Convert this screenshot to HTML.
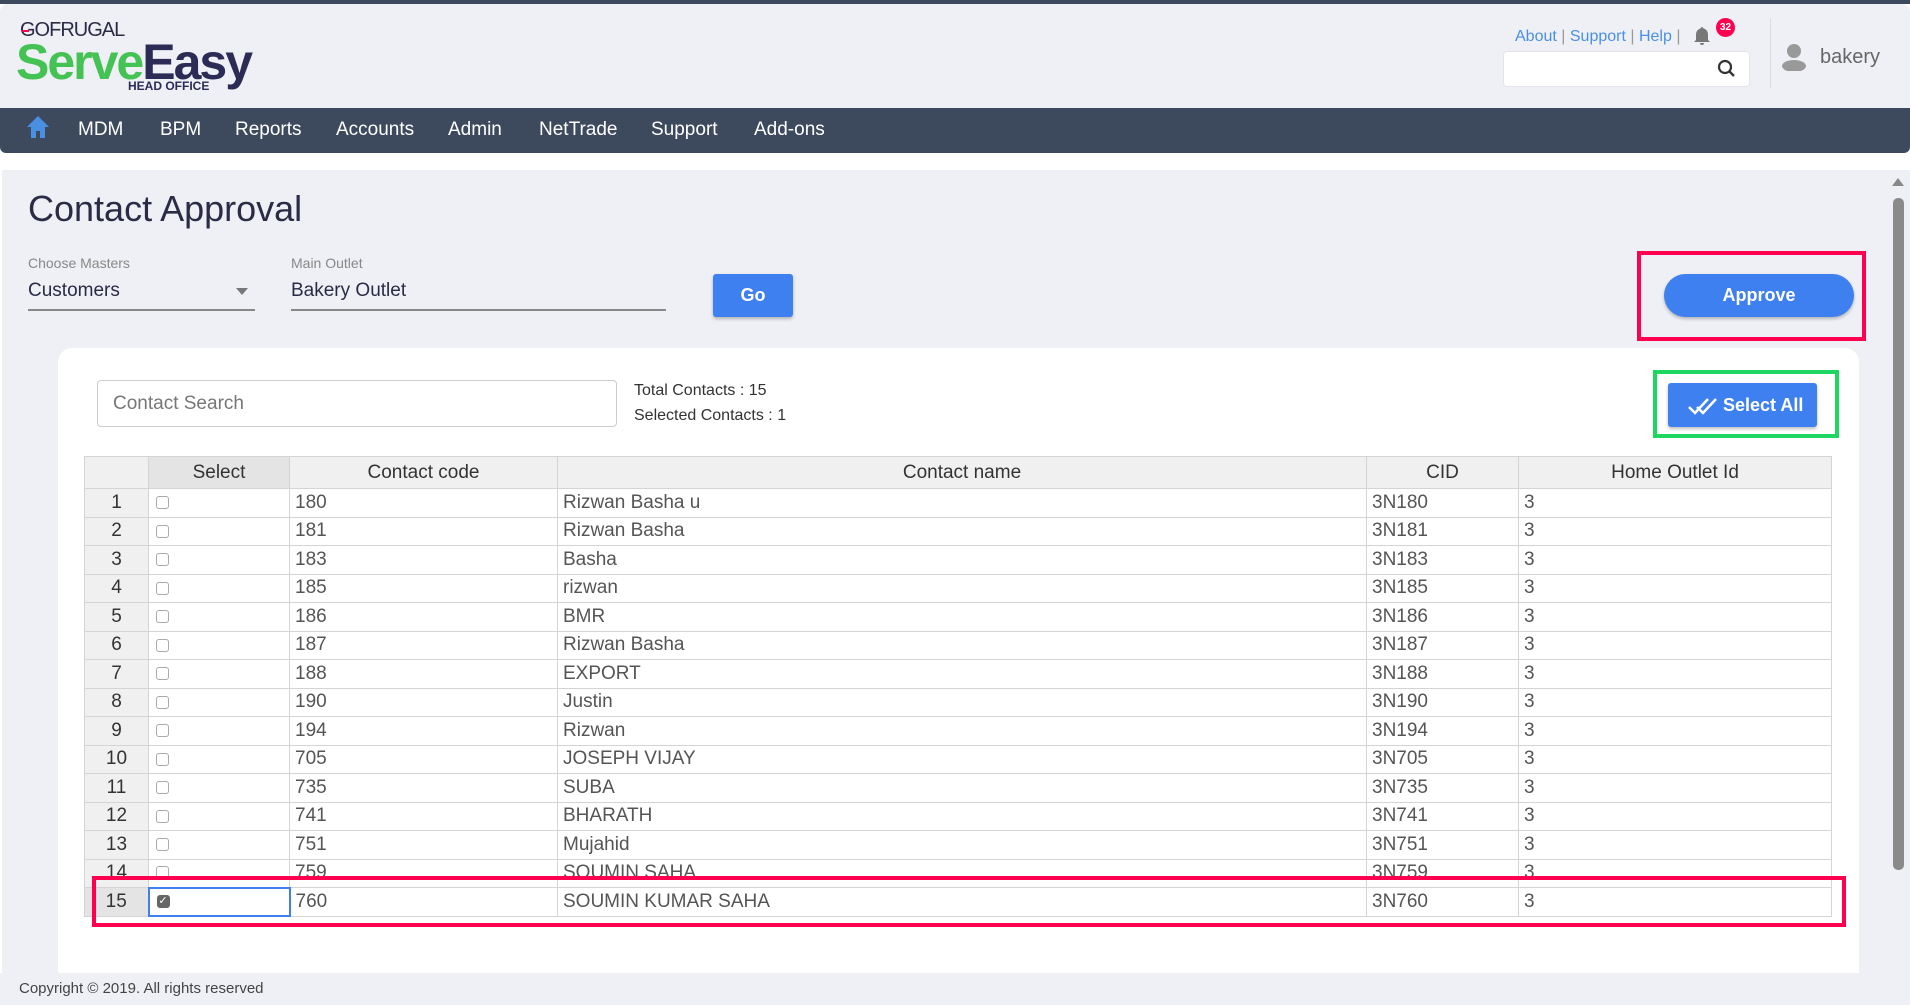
<!DOCTYPE html>
<html><head><meta charset="utf-8"><style>
*{box-sizing:border-box;margin:0;padding:0}
html{width:1910px;height:1005px;overflow:hidden}
body{width:1910px;height:1005px;overflow:hidden;background:#fff;font-family:"Liberation Sans Narrow","Liberation Sans",sans-serif;position:relative}
.a{position:absolute;white-space:nowrap}
.nav span{position:absolute;top:119px;color:#fff;font-size:19px}
table{border-collapse:collapse;position:absolute;left:84px;top:456px;width:1748px;table-layout:fixed}
td,th{border:1px solid #d4d4d4;height:28.5px;font-size:19px;color:#555;font-weight:normal;padding:0 5px;text-align:left;overflow:hidden;white-space:nowrap}
th{background:#f0f0f0;color:#333;text-align:center;height:32px}
td.i{background:#f0f0f0;color:#333;text-align:center}
.cb{display:inline-block;width:13px;height:13px;border:1px solid #aaa;border-radius:3px;vertical-align:middle;margin-left:2px}
</style></head><body>
<div class="a" style="left:0;top:0;width:1910px;height:4px;background:#3d4a5e"></div>
<div class="a" style="left:0;top:4px;width:1910px;height:104px;background:#eff0f5;border-radius:8px 8px 0 0"></div>
<div class="a" style="left:20px;top:19px;font-size:20px;color:#2b2b45;font-family:'Liberation Sans',sans-serif;letter-spacing:-1px">GOFRUGAL</div>
<div class="a" style="left:22px;top:30px;width:7px;height:2px;background:#ff0050"></div>
<div class="a" style="left:16px;top:33px;font-size:50px;font-weight:bold;font-family:'Liberation Sans',sans-serif;letter-spacing:-2px"><span style="color:#44c254">Serve</span><span style="color:#2b2b55">Easy</span></div>
<div class="a" style="left:128px;top:79px;font-size:12px;font-weight:bold;color:#2b2b55;font-family:'Liberation Sans',sans-serif">HEAD OFFICE</div>

<div class="a" style="left:1515px;top:28px;font-size:16px;color:#4a90e2">About <span style="color:#999">|</span> Support <span style="color:#999">|</span> Help <span style="color:#999">|</span></div>
<svg class="a" style="left:1692px;top:26px" width="20" height="20" viewBox="0 0 20 20"><path d="M10 1a2 2 0 0 1 1.5 1.5C14.5 3.3 16 5.5 16 9v5l2 2H2l2-2V9c0-3.5 1.5-5.7 4.5-6.5A2 2 0 0 1 10 1z M8 17h4a2 2 0 0 1-4 0z" fill="#777"/></svg>
<div class="a" style="left:1716px;top:18px;width:19px;height:19px;border-radius:50%;background:#ff0050;color:#fff;font-size:10px;font-weight:bold;text-align:center;line-height:19px;font-family:'Liberation Sans',sans-serif">32</div>
<div class="a" style="left:1503px;top:51px;width:247px;height:36px;background:#fff;border-radius:4px;border:1px solid #e4e4ea"></div>
<svg class="a" style="left:1717px;top:59px" width="20" height="20" viewBox="0 0 20 20"><circle cx="8" cy="8" r="6" fill="none" stroke="#333" stroke-width="2.2"/><path d="M12.5 12.5L17 17" stroke="#333" stroke-width="2.4"/></svg>
<div class="a" style="left:1770px;top:18px;width:1px;height:70px;background:#dcdde3"></div>
<svg class="a" style="left:1782px;top:43px" width="24" height="28" viewBox="0 0 24 28"><circle cx="12" cy="8" r="7" fill="#999"/><ellipse cx="12" cy="23" rx="12" ry="6" fill="#999"/></svg>
<div class="a" style="left:1820px;top:46px;font-size:20px;color:#666;font-family:'Liberation Sans',sans-serif">bakery</div>

<div class="a nav" style="left:0;top:108px;width:1910px;height:45px;background:#3d4a5e;border-radius:0 0 6px 6px"></div>
<svg class="a" style="left:26px;top:115px" width="24" height="24" viewBox="0 0 24 24"><path d="M12 1L1 12h4v11h5v-7h4v7h5V12h4z" fill="#4a90e2"/></svg>
<div class="nav"><span style="left:78px">MDM</span><span style="left:160px">BPM</span><span style="left:235px">Reports</span><span style="left:336px">Accounts</span><span style="left:448px">Admin</span><span style="left:539px">NetTrade</span><span style="left:651px">Support</span><span style="left:754px">Add-ons</span></div>

<div class="a" style="left:2px;top:170px;width:1908px;height:835px;background:#eef0f5"></div>
<div class="a" style="left:1892px;top:178px;width:0;height:0;border-left:6px solid transparent;border-right:6px solid transparent;border-bottom:8px solid #888"></div>
<div class="a" style="left:1893px;top:198px;width:11px;height:672px;background:#8a8a8a;border-radius:5px"></div>

<div class="a" style="left:28px;top:188px;font-size:36px;color:#2b2b45;font-family:'Liberation Sans',sans-serif;font-weight:300">Contact Approval</div>
<div class="a" style="left:28px;top:255px;font-size:14px;color:#888">Choose Masters</div>
<div class="a" style="left:291px;top:255px;font-size:14px;color:#888">Main Outlet</div>
<div class="a" style="left:28px;top:280px;font-size:19px;color:#2b2b45">Customers</div>
<div class="a" style="left:291px;top:280px;font-size:19px;color:#2b2b45">Bakery Outlet</div>
<div class="a" style="left:236px;top:288px;border-left:6px solid transparent;border-right:6px solid transparent;border-top:7px solid #777"></div>
<div class="a" style="left:28px;top:309px;width:227px;height:2px;background:#888"></div>
<div class="a" style="left:291px;top:309px;width:375px;height:2px;background:#888"></div>
<div class="a" style="left:713px;top:274px;width:80px;height:43px;background:#3f80f0;border-radius:3px;color:#fff;font-size:18px;font-weight:bold;text-align:center;line-height:43px;box-shadow:0 2px 3px rgba(0,0,0,.25)">Go</div>

<div class="a" style="left:1637px;top:251px;width:229px;height:90px;border:4px solid #ff0050"></div>
<div class="a" style="left:1664px;top:274px;width:190px;height:43px;background:#3f80f0;border-radius:22px;color:#fff;font-size:18px;font-weight:bold;text-align:center;line-height:43px;box-shadow:0 2px 3px rgba(0,0,0,.25)">Approve</div>

<div class="a" style="left:58px;top:348px;width:1801px;height:625px;background:#fff;border-radius:14px 14px 0 0"></div>
<div class="a" style="left:97px;top:380px;width:520px;height:47px;border:1px solid #ccc;border-radius:4px;font-size:19px;color:#777;padding:12px 15px">Contact Search</div>
<div class="a" style="left:634px;top:382px;font-size:16px;color:#333">Total Contacts : 15</div>
<div class="a" style="left:634px;top:407px;font-size:16px;color:#333">Selected Contacts : 1</div>
<div class="a" style="left:1653px;top:370px;width:186px;height:68px;border:4px solid #1ed760"></div>
<div class="a" style="left:1668px;top:383px;width:149px;height:44px;background:#3f80f0;border-radius:3px;color:#fff;font-size:18px;font-weight:bold;line-height:44px;padding-left:55px;box-shadow:0 2px 3px rgba(0,0,0,.25)">Select All</div>
<svg class="a" style="left:1688px;top:396px" width="30" height="20" viewBox="0 0 30 20"><path d="M1 11l6 6L20 3M9 11l6 6L28 3" fill="none" stroke="#fff" stroke-width="2.5"/></svg>

<table>
<colgroup><col style="width:64px"><col style="width:141px"><col style="width:268px"><col style="width:809px"><col style="width:152px"><col></colgroup>
<tr><th></th><th style="background:#e4e4e4">Select</th><th>Contact code</th><th>Contact name</th><th>CID</th><th>Home Outlet Id</th></tr>
<tr><td class="i">1</td><td><span class="cb"></span></td><td>180</td><td>Rizwan Basha u</td><td>3N180</td><td>3</td></tr>
<tr><td class="i">2</td><td><span class="cb"></span></td><td>181</td><td>Rizwan Basha</td><td>3N181</td><td>3</td></tr>
<tr><td class="i">3</td><td><span class="cb"></span></td><td>183</td><td>Basha</td><td>3N183</td><td>3</td></tr>
<tr><td class="i">4</td><td><span class="cb"></span></td><td>185</td><td>rizwan</td><td>3N185</td><td>3</td></tr>
<tr><td class="i">5</td><td><span class="cb"></span></td><td>186</td><td>BMR</td><td>3N186</td><td>3</td></tr>
<tr><td class="i">6</td><td><span class="cb"></span></td><td>187</td><td>Rizwan Basha</td><td>3N187</td><td>3</td></tr>
<tr><td class="i">7</td><td><span class="cb"></span></td><td>188</td><td>EXPORT</td><td>3N188</td><td>3</td></tr>
<tr><td class="i">8</td><td><span class="cb"></span></td><td>190</td><td>Justin</td><td>3N190</td><td>3</td></tr>
<tr><td class="i">9</td><td><span class="cb"></span></td><td>194</td><td>Rizwan</td><td>3N194</td><td>3</td></tr>
<tr><td class="i">10</td><td><span class="cb"></span></td><td>705</td><td>JOSEPH VIJAY</td><td>3N705</td><td>3</td></tr>
<tr><td class="i">11</td><td><span class="cb"></span></td><td>735</td><td>SUBA</td><td>3N735</td><td>3</td></tr>
<tr><td class="i">12</td><td><span class="cb"></span></td><td>741</td><td>BHARATH</td><td>3N741</td><td>3</td></tr>
<tr><td class="i">13</td><td><span class="cb"></span></td><td>751</td><td>Mujahid</td><td>3N751</td><td>3</td></tr>
<tr><td class="i">14</td><td><span class="cb"></span></td><td>759</td><td>SOUMIN SAHA</td><td>3N759</td><td>3</td></tr>
<tr><td class="i" style="background:#e4e4e4">15</td><td style="border:2px solid #3f80f0"><span class="cb" style="background:#666;border-color:#666;color:#fff;font-size:11px;line-height:11px;text-align:center">✓</span></td><td>760</td><td>SOUMIN KUMAR SAHA</td><td>3N760</td><td>3</td></tr>
</table>
<div class="a" style="left:92px;top:876px;width:1754px;height:51px;border:4px solid #ff0050"></div>

<div class="a" style="left:0;top:973px;width:1910px;height:32px;background:#eef0f5"></div>
<div class="a" style="left:19px;top:980px;font-size:15px;color:#444">Copyright © 2019. All rights reserved</div>
</body></html>
